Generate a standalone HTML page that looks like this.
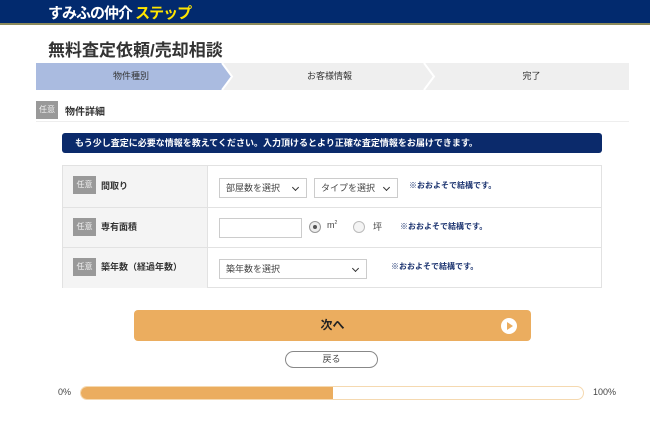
<!DOCTYPE html>
<html><head><meta charset="utf-8"><style>
*{margin:0;padding:0;box-sizing:border-box}
body{width:650px;height:421px;overflow:hidden;background:#fff;font-family:"Liberation Sans","Noto Sans CJK JP",sans-serif;position:relative;color:#222}
.a{position:absolute}
.hdr{left:0;top:0;width:650px;height:25px;background:#022a6e;border-bottom:2px solid #8c8a5a}
.logo{left:48px;top:2px;font-size:15px;font-weight:bold;color:#fff;letter-spacing:-1px}
.logo span{color:#ffe500}
.title{left:48px;top:36px;font-size:17px;font-weight:bold;color:#333}
.steps{left:36px;top:63px;width:593px;height:27px;background:#efefef}
.st{top:0;height:27px;font-size:9px;line-height:27px;text-align:center;color:#333}
.badge{background:#999;color:#eee;font-size:8px;text-align:center;width:23px;height:18px;line-height:18px}
.notice{left:62px;top:133px;width:540px;height:20px;background:#0b2a6b;border-radius:3px;color:#fff;font-size:9px;font-weight:bold;line-height:20px;padding-left:13px}
.tbl{left:62px;top:165px;width:540px;height:123px;border:1px solid #e2e2e2}
.row{left:0;width:538px;border-bottom:1px solid #e2e2e2}
.lc{left:0;top:0;width:145px;height:100%;background:#f4f4f4;border-right:1px solid #e2e2e2}
.lab{font-size:9px;font-weight:bold;color:#333}
.sel{background:#fff;border:1px solid #ccc;height:20px;font-size:9px;color:#444;line-height:18px;padding-left:6px}
.sel:after{content:"";position:absolute;right:8px;top:6px;width:4px;height:4px;border-right:1.5px solid #333;border-bottom:1.5px solid #333;transform:rotate(45deg)}
.note{font-size:8px;font-weight:bold;color:#1c3470}
</style></head><body>
<div class="a hdr"></div>
<div class="a logo">すみふの仲介 <span>ステップ</span></div>
<div class="a title">無料査定依頼/売却相談</div>
<div class="a steps">
<svg class="a" style="left:0;top:0" width="593" height="27">
<polygon points="0,0 186,0 196,13.5 186,27 0,27" fill="#aabbe0"/>
<polyline points="186,0 196,13.5 186,27" fill="none" stroke="#fff" stroke-width="2"/>
<polyline points="388,0 398,13.5 388,27" fill="none" stroke="#fff" stroke-width="2"/>
</svg>
<div class="a st" style="left:0;width:190px">物件種別</div>
<div class="a st" style="left:196px;width:195px">お客様情報</div>
<div class="a st" style="left:398px;width:195px">完了</div>
</div>
<div class="a badge" style="left:36px;top:101px;width:22px">任意</div>
<div class="a lab" style="left:65px;top:103px;font-size:10px">物件詳細</div>
<div class="a" style="left:36px;top:121px;width:593px;height:1px;background:#eee"></div>
<div class="a notice">もう少し査定に必要な情報を教えてください。入力頂けるとより正確な査定情報をお届けできます。</div>
<div class="a tbl">
<div class="a row" style="top:0;height:42px"><div class="a lc"></div>
<div class="a badge" style="left:10px;top:10px">任意</div><div class="a lab" style="left:38px;top:13px">間取り</div>
<div class="a sel" style="left:156px;top:12px;width:88px">部屋数を選択</div>
<div class="a sel" style="left:251px;top:12px;width:84px">タイプを選択</div>
<div class="a note" style="left:346px;top:14px">※おおよそで結構です。</div></div>
<div class="a row" style="top:42px;height:40px"><div class="a lc"></div>
<div class="a badge" style="left:10px;top:10px">任意</div><div class="a lab" style="left:38px;top:12px">専有面積</div>
<div class="a" style="left:156px;top:10px;width:83px;height:20px;border:1px solid #ccc;background:#fff"></div>
<div class="a" style="left:246px;top:13px;width:12px;height:12px;border:1px solid #999;border-radius:50%;background:#eee"><div class="a" style="left:3px;top:3px;width:4px;height:4px;border-radius:50%;background:#555"></div></div>
<div class="a" style="left:264px;top:12px;font-size:9px;color:#444">m<sup style="font-size:5px">2</sup></div>
<div class="a" style="left:290px;top:13px;width:12px;height:12px;border:1px solid #bbb;border-radius:50%;background:#f4f4f4"></div>
<div class="a" style="left:310px;top:12px;font-size:9px;color:#444">坪</div>
<div class="a note" style="left:337px;top:13px">※おおよそで結構です。</div></div>
<div class="a row" style="top:82px;height:40px;border-bottom:none"><div class="a lc"></div>
<div class="a badge" style="left:10px;top:10px">任意</div><div class="a lab" style="left:38px;top:12px">築年数（経過年数）</div>
<div class="a sel" style="left:156px;top:11px;width:148px">築年数を選択</div>
<div class="a note" style="left:328px;top:13px">※おおよそで結構です。</div></div>
</div>
<div class="a" style="left:134px;top:310px;width:397px;height:31px;background:#ebad5f;border-radius:4px;text-align:center;line-height:31px;font-size:12px;font-weight:bold;color:#222">次へ</div>
<svg class="a" style="left:500px;top:317px" width="18" height="18"><circle cx="9" cy="9" r="8" fill="#fff"/><polygon points="7,5 13,9 7,13" fill="#ebad5f"/></svg>
<div class="a" style="left:285px;top:351px;width:93px;height:17px;border:1px solid #888;border-radius:9px;text-align:center;font-size:9px;line-height:15px;color:#444">戻る</div>
<div class="a" style="left:58px;top:387px;font-size:9px;color:#444">0%</div>
<div class="a" style="left:593px;top:387px;font-size:9px;color:#444">100%</div>
<div class="a" style="left:80px;top:386px;width:504px;height:14px;border:1px solid #f5d9b0;border-radius:7px;overflow:hidden"><div style="width:252px;height:100%;background:#ebad5f"></div></div>
</body></html>
